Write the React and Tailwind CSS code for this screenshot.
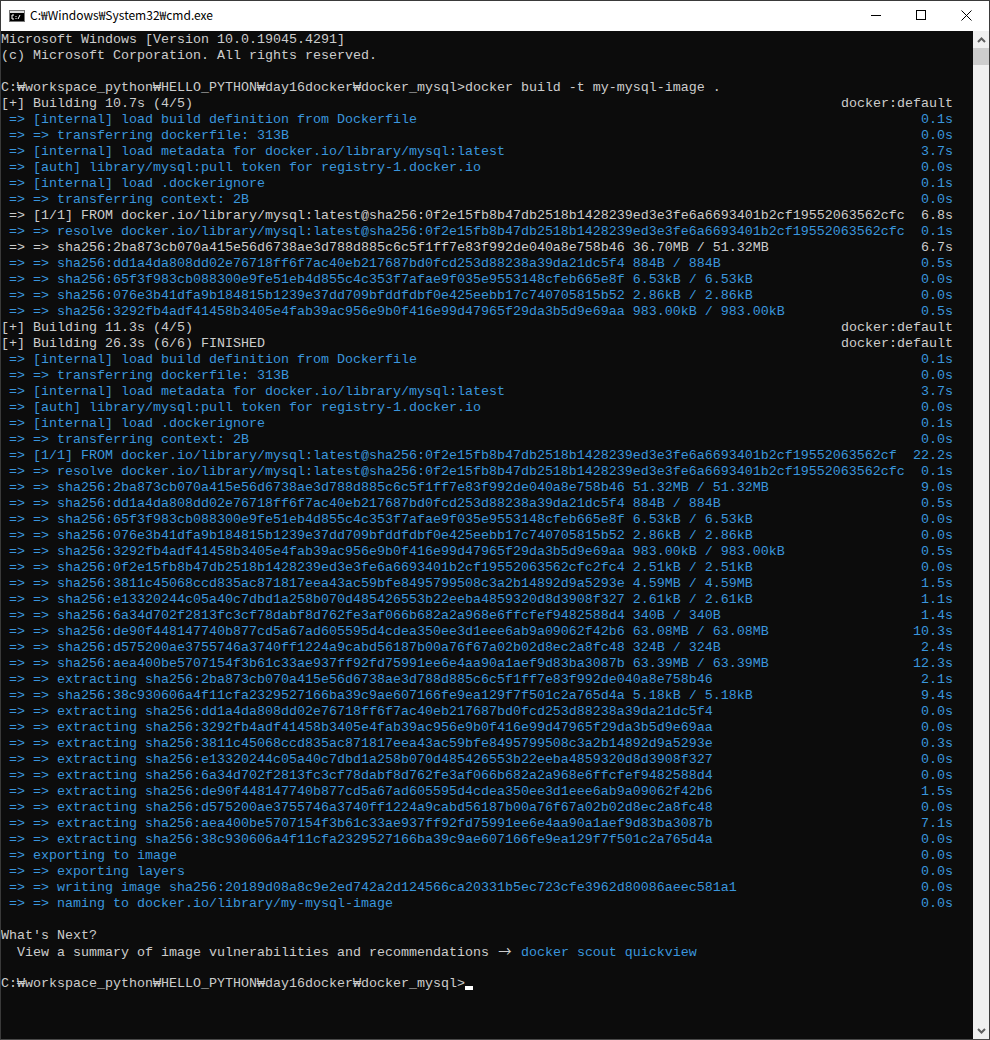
const prompt = 'C:₩workspace_python₩HELLO_PYTHON₩day16docker₩docker_mysql>'
const digest = 'sha256:0f2e15fb8b47db2518b1428239ed3e3fe6a6693401b2cf19552063562'
const ba = '2ba873cb070a415e56d6738ae3d788d885c6c5f1ff7e83f992de040a8e758b46'
const dd = 'dd1a4da808dd02e76718ff6f7ac40eb217687bd0fcd253d88238a39da21dc5f4'
const f65 = '65f3f983cb088300e9fe51eb4d855c4c353f7afae9f035e9553148cfeb665e8f'
const e07 = '076e3b41dfa9b184815b1239e37dd709bfddfdbf0e425eebb17c740705815b52'
const f32 = '3292fb4adf41458b3405e4fab39ac956e9b0f416e99d47965f29da3b5d9e69aa'
const a38 = '3811c45068ccd835ac871817eea43ac59bfe8495799508c3a2b14892d9a5293e'
const e13 = 'e13320244c05a40c7dbd1a258b070d485426553b22eeba4859320d8d3908f327'
const a6a = '6a34d702f2813fc3cf78dabf8d762fe3af066b682a2a968e6ffcfef9482588d4'
const de9 = 'de90f448147740b877cd5a67ad605595d4cdea350ee3d1eee6ab9a09062f42b6'
const d57 = 'd575200ae3755746a3740ff1224a9cabd56187b00a76f67a02b02d8ec2a8fc48'
const aea = 'aea400be5707154f3b61c33ae937ff92fd75991ee6e4aa90a1aef9d83ba3087b'
const c38 = '38c930606a4f11cfa2329527166ba39c9ae607166fe9ea129f7f501c2a765d4a'

// [left text, right text, blue?]
const lines = [
  ['Microsoft Windows [Version 10.0.19045.4291]'],
  ['(c) Microsoft Corporation. All rights reserved.'],
  [''],
  [prompt + 'docker build -t my-mysql-image .'],
  ['[+] Building 10.7s (4/5)', 'docker:default'],
  [' => [internal] load build definition from Dockerfile', '0.1s', true],
  [' => => transferring dockerfile: 313B', '0.0s', true],
  [' => [internal] load metadata for docker.io/library/mysql:latest', '3.7s', true],
  [' => [auth] library/mysql:pull token for registry-1.docker.io', '0.0s', true],
  [' => [internal] load .dockerignore', '0.1s', true],
  [' => => transferring context: 2B', '0.0s', true],
  [` => [1/1] FROM docker.io/library/mysql:latest@${digest}cfc`, '6.8s'],
  [` => => resolve docker.io/library/mysql:latest@${digest}cfc`, '0.1s', true],
  [` => => sha256:${ba} 36.70MB / 51.32MB`, '6.7s'],
  [` => => sha256:${dd} 884B / 884B`, '0.5s', true],
  [` => => sha256:${f65} 6.53kB / 6.53kB`, '0.0s', true],
  [` => => sha256:${e07} 2.86kB / 2.86kB`, '0.0s', true],
  [` => => sha256:${f32} 983.00kB / 983.00kB`, '0.5s', true],
  ['[+] Building 11.3s (4/5)', 'docker:default'],
  ['[+] Building 26.3s (6/6) FINISHED', 'docker:default'],
  [' => [internal] load build definition from Dockerfile', '0.1s', true],
  [' => => transferring dockerfile: 313B', '0.0s', true],
  [' => [internal] load metadata for docker.io/library/mysql:latest', '3.7s', true],
  [' => [auth] library/mysql:pull token for registry-1.docker.io', '0.0s', true],
  [' => [internal] load .dockerignore', '0.1s', true],
  [' => => transferring context: 2B', '0.0s', true],
  [` => [1/1] FROM docker.io/library/mysql:latest@${digest}cf`, '22.2s', true],
  [` => => resolve docker.io/library/mysql:latest@${digest}cfc`, '0.1s', true],
  [` => => sha256:${ba} 51.32MB / 51.32MB`, '9.0s', true],
  [` => => sha256:${dd} 884B / 884B`, '0.5s', true],
  [` => => sha256:${f65} 6.53kB / 6.53kB`, '0.0s', true],
  [` => => sha256:${e07} 2.86kB / 2.86kB`, '0.0s', true],
  [` => => sha256:${f32} 983.00kB / 983.00kB`, '0.5s', true],
  [' => => sha256:0f2e15fb8b47db2518b1428239ed3e3fe6a6693401b2cf19552063562cfc2fc4 2.51kB / 2.51kB', '0.0s', true],
  [` => => sha256:${a38} 4.59MB / 4.59MB`, '1.5s', true],
  [` => => sha256:${e13} 2.61kB / 2.61kB`, '1.1s', true],
  [` => => sha256:${a6a} 340B / 340B`, '1.4s', true],
  [` => => sha256:${de9} 63.08MB / 63.08MB`, '10.3s', true],
  [` => => sha256:${d57} 324B / 324B`, '2.4s', true],
  [` => => sha256:${aea} 63.39MB / 63.39MB`, '12.3s', true],
  [` => => extracting sha256:${ba}`, '2.1s', true],
  [` => => sha256:${c38} 5.18kB / 5.18kB`, '9.4s', true],
  [` => => extracting sha256:${dd}`, '0.0s', true],
  [` => => extracting sha256:${f32}`, '0.0s', true],
  [` => => extracting sha256:${a38}`, '0.3s', true],
  [` => => extracting sha256:${e13}`, '0.0s', true],
  [` => => extracting sha256:${a6a}`, '0.0s', true],
  [` => => extracting sha256:${de9}`, '1.5s', true],
  [` => => extracting sha256:${d57}`, '0.0s', true],
  [` => => extracting sha256:${aea}`, '7.1s', true],
  [` => => extracting sha256:${c38}`, '0.0s', true],
  [' => exporting to image', '0.0s', true],
  [' => => exporting layers', '0.0s', true],
  [' => => writing image sha256:20189d08a8c9e2ed742a2d124566ca20331b5ec723cfe3962d80086aeec581a1', '0.0s', true],
  [' => => naming to docker.io/library/my-mysql-image', '0.0s', true],
  [''],
]

function CmdIcon() {
  return (
    <svg width="16" height="12" viewBox="0 0 16 12" className="shrink-0">
      <rect width="16" height="12" fill="#000" />
      <rect x="0.5" y="0.5" width="15" height="11" fill="none" stroke="#777" />
      <rect x="1" y="1" width="14" height="2" fill="#ddd" />
      <path d="M5 5H3V9H5M7 6V7M7 8V9M9 9L11 5" stroke="#fff" fill="none" />
    </svg>
  )
}

function Chevron({ down }) {
  return (
    <svg width="9" height="6" viewBox="0 0 9 6" className={down ? 'rotate-180' : ''}>
      <path d="M1 5L4.5 1.5L8 5" stroke="#5f5f5f" strokeWidth="2" fill="none" />
    </svg>
  )
}

export default function App() {
  return (
    <div className="h-[1040px] w-[990px] flex flex-col overflow-hidden border border-[#3a3a3a] border-b-[#4a4a4a] bg-[#0c0c0c]">
      {/* Title bar */}
      <header className="h-[30px] shrink-0 bg-white flex items-center">
        <div className="ml-2 mr-[5px] flex items-center">
          <CmdIcon />
        </div>
        <span className="pb-[2px] text-xs text-black font-['Noto_Sans_CJK_KR','Open_Sans',sans-serif] leading-none">
          C:₩Windows₩System32₩cmd.exe
        </span>
        <div className="ml-auto flex items-center h-full pb-[2px]">
          <button className="w-[45px] h-full flex items-center justify-center" aria-label="Minimize">
            <span className="block w-[10px] h-px bg-black" />
          </button>
          <button className="w-[45px] h-full flex items-center justify-center" aria-label="Maximize">
            <span className="block w-[10px] h-[10px] border border-black" />
          </button>
          <button className="w-[46px] h-full flex items-center justify-center" aria-label="Close">
            <svg width="11" height="11" viewBox="0 0 11 11">
              <path d="M0.5 0.5L10.5 10.5M10.5 0.5L0.5 10.5" stroke="#000" fill="none" />
            </svg>
          </button>
        </div>
      </header>

      <div className="flex-1 flex min-h-0">
        {/* Console output */}
        <main className="flex-1 min-w-0 pt-px text-[13.333px] leading-4 text-[#cccccc] whitespace-pre font-['Liberation_Mono','DejaVu_Sans_Mono',monospace]">
          {lines.map(([left, right, blue], i) => (
            <div key={i} className={`h-4 w-[952px] flex justify-between ${blue ? 'text-[#3a96dd]' : ''}`}>
              <span>{left}</span>
              {right && <span>{right}</span>}
            </div>
          ))}
          <div className="h-4">What's Next?</div>
          <div className="h-4">
            {'  View a summary of image vulnerabilities and recommendations '}
            <span className="inline-block w-4 text-center font-['Noto_Sans_CJK_KR',sans-serif] leading-none">→</span>
            {' '}
            <span className="text-[#3a96dd]">docker scout quickview</span>
          </div>
          <div className="h-4" />
          <div className="h-4 flex">
            <span>{prompt}</span>
            <span className="w-2 h-1 bg-white mt-[10px]" />
          </div>
        </main>

        {/* Scrollbar */}
        <aside className="w-4 shrink-0 bg-[#f0f0f0] flex flex-col">
          <div className="h-[17px] flex items-center justify-center">
            <Chevron />
          </div>
          <div className="h-[17px] bg-[#cdcdcd]" />
          <div className="flex-1" />
          <div className="h-[17px] flex items-center justify-center">
            <Chevron down />
          </div>
        </aside>
      </div>
    </div>
  )
}
